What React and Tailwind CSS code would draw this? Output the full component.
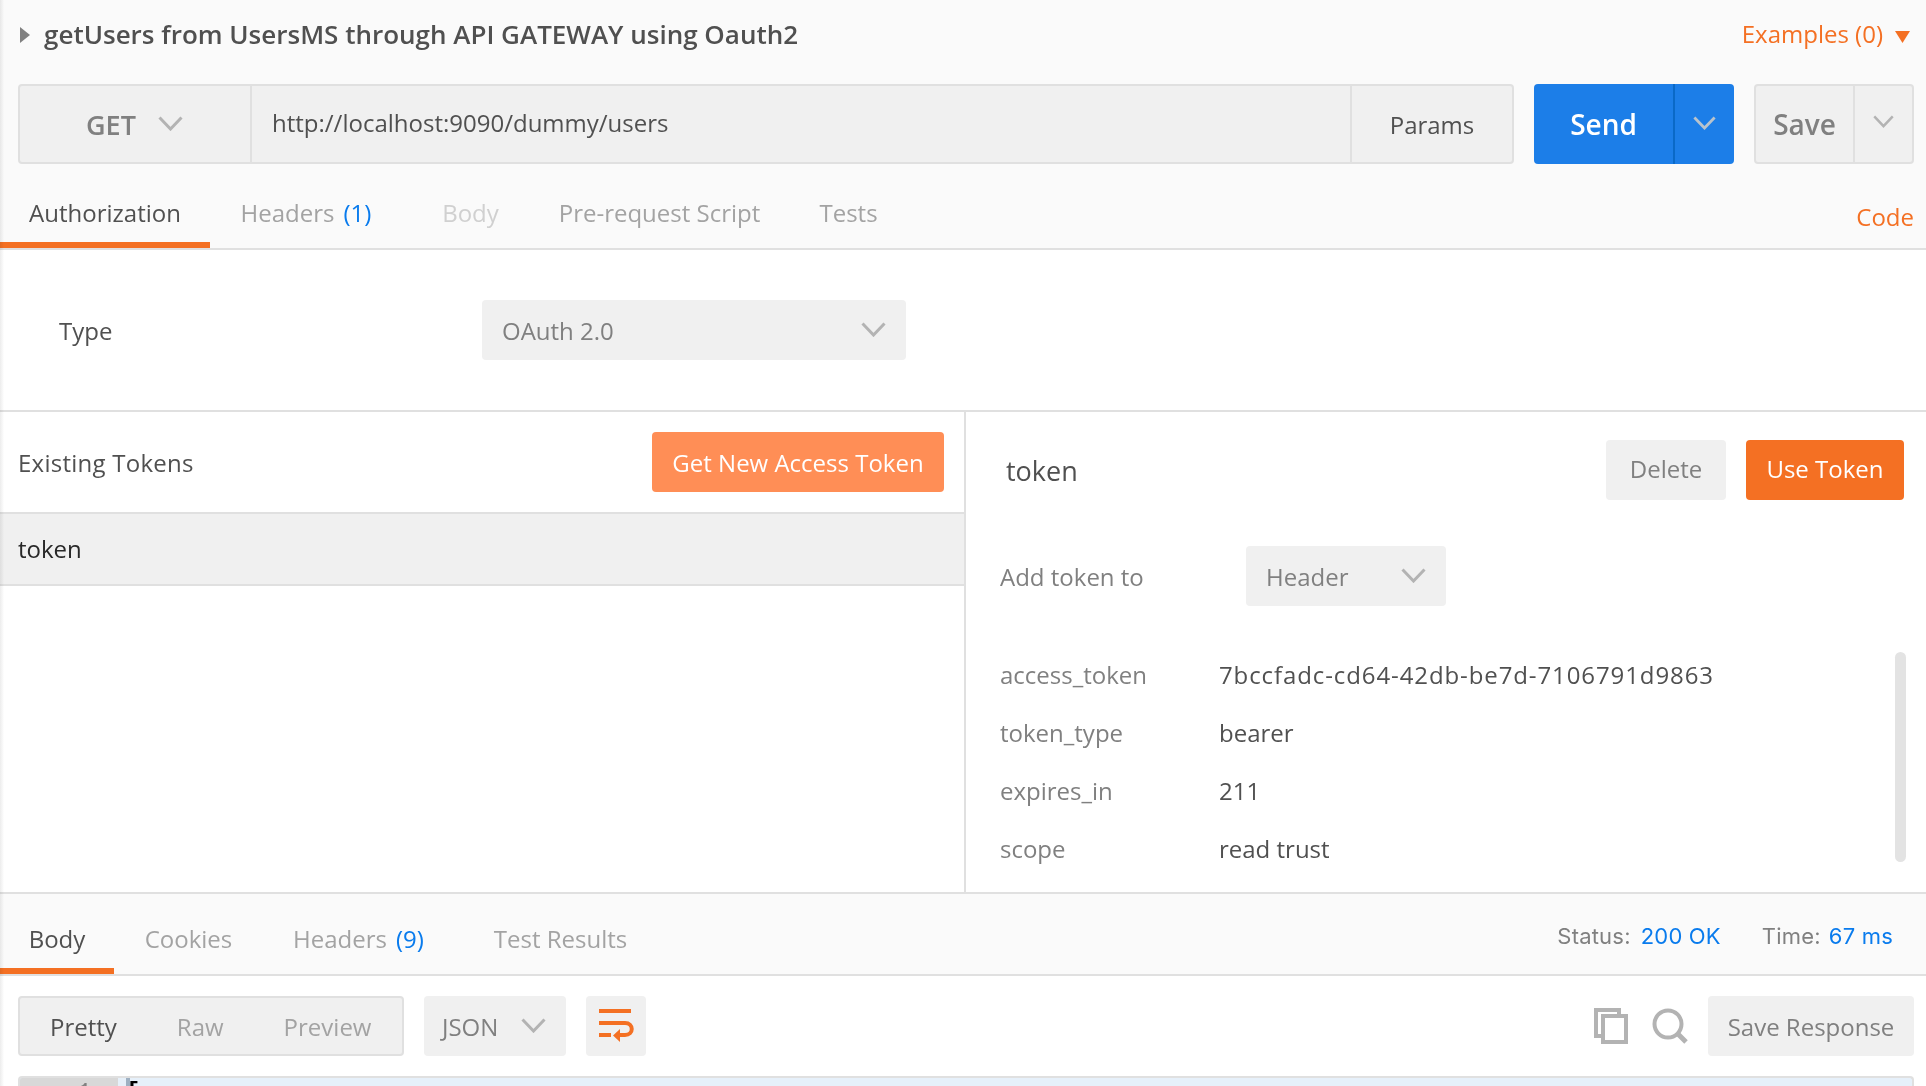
import React from 'react';

const Chevron = ({ className = 'w-[25px] h-[15px]', color = '#b3b3b3' }) => (
  <svg className={className} viewBox="0 0 25 15" fill="none">
    <path d="M1.5 1.5 L12.5 13 L23.5 1.5" stroke={color} strokeWidth="3" />
  </svg>
);

const Tab = ({ active, disabled, label, count, width }) => (
  <div className={`${width} h-full flex items-center justify-center pb-[2px] border-b-[6px] ${active ? 'border-[#f47023] text-[#505050]' : 'border-transparent'} ${disabled ? 'text-[#d0d0d0]' : active ? '' : 'text-[#a3a3a3]'}`}>
    <span>{label}</span>
    {count && <span className="ml-[9px] text-[#097bed]">{count}</span>}
  </div>
);

const TokenRow = ({ name, value, wide }) => (
  <div className="flex items-center h-[58px]">
    <span className="w-[219px] text-[#808080]">{name}</span>
    <span className={`text-[#505050] ${wide ? 'tracking-[0.9px]' : ''}`}>{value}</span>
  </div>
);

export default function App() {
  return (
    <div className="relative w-[1926px] h-[1086px] overflow-hidden bg-white font-['Open_Sans',sans-serif] text-[24px] leading-none text-[#505050]">
      {/* edge shadow */}
      <div className="absolute left-0 top-0 bottom-0 w-[4px] bg-gradient-to-r from-[#ececec] to-transparent mix-blend-multiply" />

      {/* Request header */}
      <div className="bg-[#fafafa] h-[250px] border-b-2 border-[#e0e0e0]">
        <div className="h-[84px] pl-[20px] pr-[16px] flex items-center justify-between pb-[16px]">
          <div className="flex items-center">
            <svg className="w-[10px] h-[16px] mt-[2px]" viewBox="0 0 10 16"><path d="M0 0 L10 8 L0 16 Z" fill="#808080" /></svg>
            <span className="ml-[14px] text-[26px] font-semibold text-[#505050]">getUsers from UsersMS through API GATEWAY using Oauth2</span>
          </div>
          <div className="flex items-center text-[#f47023]">
            <span>Examples (0)</span>
            <svg className="ml-[12px] mt-[6px] w-[15px] h-[12px]" viewBox="0 0 15 12"><path d="M0 0 L15 0 L7.5 12 Z" fill="#f47023" /></svg>
          </div>
        </div>

        <div className="flex h-[80px] pl-[18px] pr-[12px]">
          <div className="flex w-[1496px] bg-[#f0f0f0] border-2 border-[#e0e0e0] rounded-[4px]">
            <div className="w-[232px] flex items-center border-r-2 border-[#e0e0e0] pl-[66px]">
              <span className="text-[27px] font-semibold text-[#808080]">GET</span>
              <Chevron className="ml-[22px] w-[25px] h-[15px] -mt-[2px]" />
            </div>
            <div className="flex-1 flex items-center pl-[20px] text-[#505050] -mt-[2px]">http://localhost:9090/dummy/users</div>
            <div className="w-[162px] flex items-center justify-center pt-[2px] border-l-2 border-[#e0e0e0]">Params</div>
          </div>
          <div className="ml-[20px] flex w-[200px] bg-[#1c7ee8] rounded-[4px]">
            <div className="w-[139px] flex items-center justify-center text-white text-[28px] font-semibold">Send</div>
            <div className="flex-1 flex items-center justify-center border-l-2 border-[#0a69c7]">
              <Chevron className="w-[23px] h-[14px] -mt-[3px]" color="#b9c3cc" />
            </div>
          </div>
          <div className="ml-[20px] flex w-[160px] bg-[#f0f0f0] border-2 border-[#e0e0e0] rounded-[4px]">
            <div className="w-[97px] flex items-center justify-center text-[28px] font-semibold text-[#808080]">Save</div>
            <div className="flex-1 flex items-center justify-center border-l-2 border-[#e0e0e0]">
              <Chevron className="w-[21px] h-[13px] -mt-[5px]" />
            </div>
          </div>
        </div>

        <div className="flex items-end justify-between h-[84px] pr-[12px]">
          <div className="flex h-[63px] items-stretch">
            <Tab active label="Authorization" width="w-[210px]" />
            <Tab label="Headers" count="(1)" width="w-[192px]" />
            <Tab disabled label="Body" width="w-[137px]" />
            <Tab label="Pre-request Script" width="w-[241px]" />
            <Tab label="Tests" width="w-[137px]" />
          </div>
          <span className="mb-[19px] text-[#f47023]">Code</span>
        </div>
      </div>

      {/* Auth type */}
      <div className="h-[162px] border-b-2 border-[#e0e0e0] flex items-start pt-[50px] pl-[59px]">
        <span className="w-[423px] h-[60px] flex items-center pt-[1px] text-[#505050]">Type</span>
        <div className="w-[424px] h-[60px] bg-[#f0f0f0] rounded-[4px] flex items-center justify-between pl-[20px] pr-[20px] pt-[1px] text-[#808080]">
          <span>OAuth 2.0</span>
          <Chevron className="w-[25px] h-[15px] -mt-[2px]" />
        </div>
      </div>

      {/* Tokens */}
      <div className="flex h-[482px] border-b-2 border-[#e0e0e0]">
        <div className="w-[964px] border-r-2 border-[#e0e0e0] box-content">
          <div className="h-[102px] border-b-2 border-[#e0e0e0] flex items-center justify-between pl-[18px] pr-[20px]">
            <span className="pt-[2px] tracking-[0.25px]">Existing Tokens</span>
            <div className="w-[292px] h-[60px] rounded-[4px] bg-[#ff8e56] text-white flex items-center justify-center pt-[2px]">Get New Access Token</div>
          </div>
          <div className="h-[72px] bg-[#f0f0f0] border-b-2 border-[#e0e0e0] flex items-center pl-[18px] text-[#282828]">token</div>
        </div>
        <div className="relative flex-1 pl-[34px] pr-[22px]">
          <div className="flex items-center justify-between h-[60px] mt-[28px] pl-[6px]">
            <span className="text-[27px]">token</span>
            <div className="flex gap-[20px]">
              <div className="w-[120px] h-[60px] rounded-[4px] bg-[#f0f0f0] flex items-center justify-center pb-[2px] text-[#808080]">Delete</div>
              <div className="w-[158px] h-[60px] rounded-[4px] bg-[#f47023] flex items-center justify-center pb-[2px] text-white">Use Token</div>
            </div>
          </div>
          <div className="flex items-center h-[60px] mt-[46px]">
            <span className="w-[246px] pt-[2px] text-[#808080]">Add token to</span>
            <div className="w-[200px] h-[60px] rounded-[4px] bg-[#f0f0f0] flex items-center justify-between pl-[20px] pr-[20px] text-[#808080]">
              <span className="pt-[2px]">Header</span>
              <Chevron className="w-[25px] h-[15px] -mt-[2px]" />
            </div>
          </div>
          <div className="mt-[40px]">
            <TokenRow wide name="access_token" value="7bccfadc-cd64-42db-be7d-7106791d9863" />
            <TokenRow name="token_type" value="bearer" />
            <TokenRow name="expires_in" value="211" />
            <TokenRow name="scope" value="read trust" />
          </div>
          {/* scrollbar */}
          <div className="absolute top-[240px] right-[20px] w-[11px] h-[210px] rounded-full bg-[#e3e3e3]" />
        </div>
      </div>

      {/* Response tabs */}
      <div className="bg-[#fafafa] h-[82px] border-b-2 border-[#e0e0e0] flex items-end justify-between pr-[33px]">
        <div className="flex h-[62px] items-stretch">
          <Tab active label="Body" width="w-[114px]" />
          <Tab label="Cookies" width="w-[149px]" />
          <Tab label="Headers" count="(9)" width="w-[191px]" />
          <Tab label="Test Results" width="w-[213px]" />
        </div>
        <div className="flex items-center h-[80px] pt-[4px] font-['Inter',sans-serif] text-[22px] tracking-[0.2px]">
          <span className="text-[#808080]">Status:</span>
          <span className="ml-[10px] text-[#097bed]">200 OK</span>
          <span className="ml-[41px] text-[#808080]">Time:</span>
          <span className="ml-[8px] text-[#097bed]">67 ms</span>
        </div>
      </div>

      {/* Response toolbar */}
      <div className="flex items-center h-[100px] pl-[18px] pr-[12px]">
        <div className="w-[386px] h-[60px] flex items-center pt-[2px] bg-[#f0f0f0] border-2 border-[#e0e0e0] rounded-[4px]">
          <span className="ml-[30px] text-[#505050]">Pretty</span>
          <span className="ml-[60px] text-[#a3a3a3]">Raw</span>
          <span className="ml-[60px] text-[#a3a3a3]">Preview</span>
        </div>
        <div className="ml-[20px] w-[142px] h-[60px] bg-[#f0f0f0] rounded-[4px] flex items-center justify-between pl-[18px] pr-[20px] text-[#808080]">
          <span className="pt-[2px]">JSON</span>
          <Chevron className="w-[25px] h-[15px] -mt-[2px]" />
        </div>
        <div className="ml-[20px] w-[60px] h-[60px] bg-[#f0f0f0] rounded-[4px] flex items-center justify-center">
          <svg className="w-[36px] h-[34px]" viewBox="0 0 36 34" fill="none">
            <path d="M1 2 H33 M1 14 H27 C36 14 36 26 27 26 H20 M1 26 H13" stroke="#f47023" strokeWidth="4" />
            <path d="M22 20 L15 26.5 L22 33 Z" fill="#f47023" />
          </svg>
        </div>
        <div className="ml-auto flex items-center">
          <svg className="w-[34px] h-[36px]" viewBox="0 0 34 36" fill="none">
            <path d="M25 6 V2 H2 V28 H9" stroke="#b3b3b3" strokeWidth="4" />
            <rect x="9" y="8" width="23" height="26" stroke="#b3b3b3" strokeWidth="4" />
          </svg>
          <svg className="ml-[24px] w-[36px] h-[36px]" viewBox="0 0 36 36" fill="none">
            <circle cx="16" cy="16" r="13.5" stroke="#b3b3b3" strokeWidth="4" />
            <path d="M25 25 L34 34" stroke="#b3b3b3" strokeWidth="5" />
          </svg>
          <div className="ml-[20px] w-[206px] h-[60px] rounded-[4px] bg-[#f0f0f0] flex items-center justify-center pt-[2px] text-[#808080]">Save Response</div>
        </div>
      </div>

      {/* Response body, cut off by the window */}
      <div className="flex h-[40px] ml-[18px] mr-[12px] border-t-2 border-x-2 border-[#e0e0e0] rounded-t-[4px] bg-[#e6f0fa] overflow-hidden font-['Liberation_Mono',monospace] text-[24px]">
        <div className="w-[98px] bg-[#d8d8d8] text-right pt-[3px] pr-[26px] text-[#808080]">1</div>
        <div className="ml-[8px] w-[4px] bg-[#9eb0c2]" />
        <span className="-ml-[4px] pt-[3px] font-bold text-black">[</span>
      </div>
    </div>
  );
}
